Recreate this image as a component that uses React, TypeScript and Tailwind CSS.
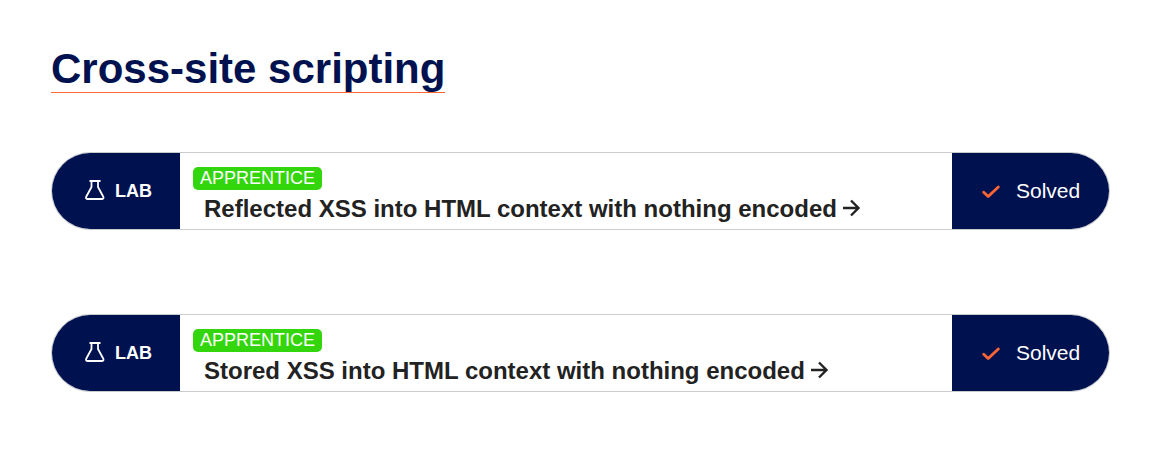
type Lab = { title: string; level: string; status: string };

const labs: Lab[] = [
  { title: "Reflected XSS into HTML context with nothing encoded", level: "APPRENTICE", status: "Solved" },
  { title: "Stored XSS into HTML context with nothing encoded", level: "APPRENTICE", status: "Solved" },
];

function FlaskIcon() {
  return (
    <svg width="20" height="22" viewBox="0 1 20 22" fill="none" stroke="#fff" strokeWidth="1.8" strokeLinejoin="round" aria-hidden="true">
      <path d="M4.500 2H15.500M6.500 2V8L1.200 17.800Q.5 20 2.800 20H16.700Q19 20 18.300 17.800L13 8V2" />
    </svg>
  );
}

function CheckIcon() {
  return (
    <svg width="18" height="16" viewBox="0 0 18 16" fill="none" stroke="#ff6633" strokeWidth="2.8" strokeLinejoin="round" strokeLinecap="round" aria-hidden="true">
      <path d="M1.700 9.200L6.200 13.600L16.300 4" />
    </svg>
  );
}

function ArrowIcon() {
  return (
    <svg className="shrink-0" width="18" height="20" viewBox="0 0 18 20" fill="none" stroke="#222" strokeWidth="2.4" aria-hidden="true">
      <path d="M0 9H15.500M8 1.500L15.500 9L8 16.500" />
    </svg>
  );
}

function LabCard({ lab }: { lab: Lab }) {
  return (
    <li className="flex min-h-[78px] overflow-hidden rounded-full border border-[#c8cccc] bg-white">
      <div className="flex w-32 shrink-0 items-center gap-2.5 bg-[#00114f] pl-[33px] pb-px text-lg font-bold text-white">
        <FlaskIcon />
        <span>LAB</span>
      </div>
      <div className="flex min-w-0 grow flex-col items-start pl-[13px] pt-3.5">
        <span className="rounded-[5px] bg-[#33d60d] px-[7px] text-lg leading-[23px] text-white">{lab.level}</span>
        <a href="#" className="flex items-center gap-1.5 pl-[11px] pt-[3px] text-2xl leading-8 font-bold text-[#222]">
          {lab.title}
          <ArrowIcon />
        </a>
      </div>
      <div className="flex w-[157px] shrink-0 items-center gap-4 bg-[#00114f] pl-[30px] text-[21px] text-white">
        <CheckIcon />
        <span>{lab.status}</span>
      </div>
    </li>
  );
}

export default function App() {
  return (
    <main className="bg-white pl-[51px] pr-[52px] pt-[45px] pb-20 font-['Liberation_Sans',Arial,sans-serif]">
      <h1 className="w-fit border-b border-[#ff6633] text-[42px] leading-[47px] font-bold text-[#00114f]">Cross-site scripting</h1>
      <ul className="mt-[59px] flex flex-col gap-[84px]">
        {labs.map((lab) => (
          <LabCard key={lab.title} lab={lab} />
        ))}
      </ul>
    </main>
  );
}
